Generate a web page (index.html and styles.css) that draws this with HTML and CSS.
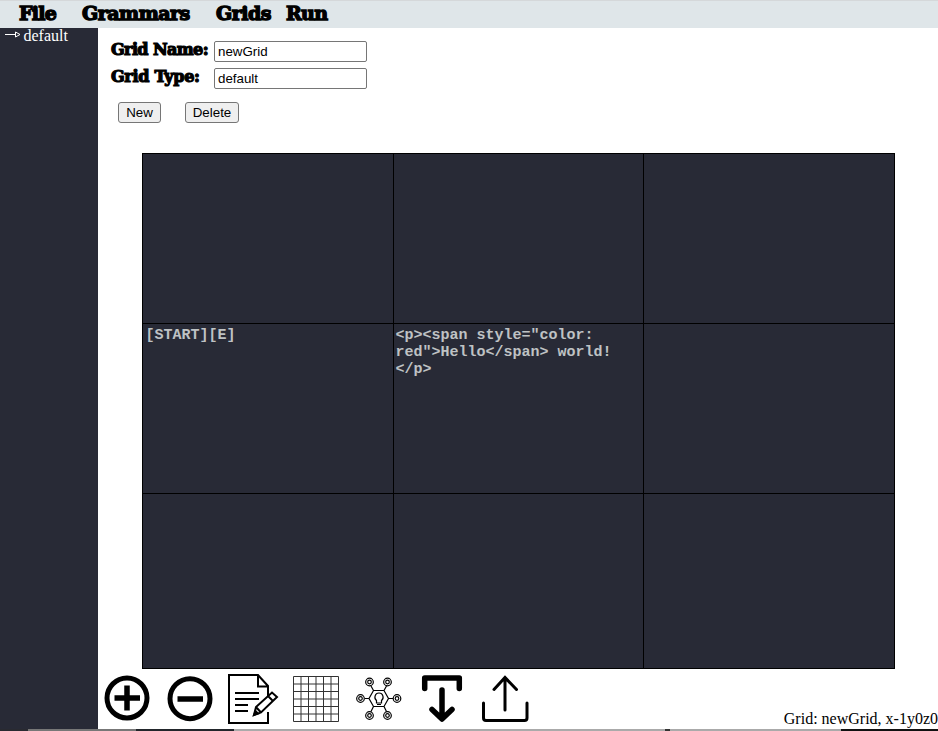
FILE: index.html
```html
<!DOCTYPE html>
<html lang="en">
<head>
<meta charset="utf-8">
<title>Grid editor</title>
<link rel="stylesheet" href="styles.css">
</head>
<body>
<div class="app">
  <nav class="menu">
    <span class="file">File</span><span class="grammars">Grammars</span><span class="grids">Grids</span><span class="run">Run</span>
  </nav>
  <div class="body">
    <aside class="sidebar">
      <svg width="16" height="8" viewBox="0 0 16 8" fill="none" stroke="#fff"><path d="M0 3.500H11M10.500 1L15 3.500L10.500 6Z"/></svg>
      <span>default</span>
    </aside>
    <main class="main">
      <form class="form">
        <label class="field"><span class="label name">Grid Name:</span><input type="text" value="newGrid"></label>
        <label class="field"><span class="label type">Grid Type:</span><input type="text" value="default"></label>
        <div class="buttons"><button type="button" class="new">New</button><button type="button" class="delete">Delete</button></div>
      </form>
      <div class="grid">
        <div></div><div></div><div></div>
        <div>[START][E]</div><div>&lt;p&gt;&lt;span style="color: red"&gt;Hello&lt;/span&gt; world!&lt;/p&gt;</div><div></div>
        <div></div><div></div><div></div>
      </div>
      <footer class="footer">
        <div class="tools">
          <svg width="46" height="56" viewBox="104 670 46 56" fill="none" stroke="#000"><circle cx="127" cy="698" r="20" stroke-width="5"/><path d="M114.500 698H140M127 685.500V710.500" stroke-width="5.500"/></svg>
          <svg width="46" height="56" viewBox="167 670 46 56" fill="none" stroke="#000"><circle cx="190" cy="698.700" r="20" stroke-width="5"/><path d="M177.500 699H203" stroke-width="5.500"/></svg>
          <svg width="52" height="56" viewBox="227 670 52 56" fill="none" stroke="#000" stroke-width="2"><path d="M268 712V723H229V675H258L268 686V698M258 675V686.500H268M235 693H259M235 699H259M235 705H248M235 711H248"/><path d="M254 715L256 707L272 692.500L277 697L261 712.500ZM256 707L261 712.500M268 696L273 701" fill="#fff"/><path d="M254 715L255.500 711L258 713.500Z" fill="#000"/></svg>
          <svg width="48" height="56" viewBox="292 670 48 56" fill="none" stroke="#333"><path d="M293.500 676.500H338.500V721.500H293.500ZM301 676V722M308.500 676V722M316 676V722M323.500 676V722M331 676V722M293 684H339M293 691.500H339M293 699H339M293 706.500H339M293 714H339"/></svg>
          <svg width="48" height="56" viewBox="355 670 48 56" fill="none" stroke="#000" stroke-width="1.200">
            <path d="M373.500 690.500H384L388.500 698.500L384 706.500H373.500L369 698.500ZM373.500 690.500L371 686M384 690.500L386.500 686M388.500 698.500H393M384 706.500L386.500 711.500M373.500 706.500L371 711.500M369 698.500H365"/>
            <path d="M376.500 700.500C373.500 698 375 693 379 693S384.500 698 381.500 700.500V703H376.500ZM377 704.500H381"/>
            <circle cx="369.500" cy="682" r="3.800"/><circle cx="369.500" cy="682" r="1.800"/>
            <circle cx="387.500" cy="682" r="3.800"/><circle cx="387.500" cy="682" r="1.800"/>
            <circle cx="360.500" cy="698.500" r="3.800"/><circle cx="360.500" cy="698.500" r="1.800"/>
            <circle cx="397" cy="698.500" r="3.800"/><circle cx="397" cy="698.500" r="1.800"/>
            <circle cx="369.500" cy="715.500" r="3.800"/><circle cx="369.500" cy="715.500" r="1.800"/>
            <circle cx="387.500" cy="715.500" r="3.800"/><circle cx="387.500" cy="715.500" r="1.800"/>
          </svg>
          <svg width="42" height="56" viewBox="421 670 42 56" fill="none" stroke="#000" stroke-width="5.500" stroke-linecap="round" stroke-linejoin="round"><path d="M424.700 688.500V678H459.300V688.500M442 690V718M432 709.500L442 719L452 709.500"/></svg>
          <svg width="50" height="56" viewBox="480 670 50 56" fill="none" stroke="#000" stroke-width="3" stroke-linecap="round"><path d="M505 710V678M494 689.500L505 677.500L516.500 689.500M483.500 703V718Q483.500 720.500 486 720.500H524.500Q527 720.500 527 718V703"/></svg>
        </div>
        <div class="status">Grid: newGrid, x-1y0z0</div>
      </footer>
    </main>
  </div>
  <div class="edge"><i class="e1"></i><i class="e2"></i><i class="e3"></i><i class="e4"></i><i class="e6"></i><i class="e7"></i><i class="e5"></i></div>
</div>
</body>
</html>
```
FILE: styles.css
```css
* { box-sizing: border-box; }
body { margin: 0; background: #fff; color: #000; font-family: "Liberation Serif", serif; font-size: 16px; }
.app { width: 938px; height: 731px; display: flex; flex-direction: column; overflow: hidden; }
.menu { height: 28px; flex: none; display: flex; padding-left: 19px; background: #dfe6e9; border-top: 1px solid #d5d8da; font: 900 19px/24px "DejaVu Serif", serif; -webkit-text-stroke: 1.4px #000; white-space: nowrap; }
.file { width: 63px; letter-spacing: -0.7px; }
.grammars { width: 134px; letter-spacing: -0.5px; }
.grids { width: 70px; letter-spacing: -0.5px; }
.run { letter-spacing: -0.7px; }
.body { flex: 1; min-height: 0; display: flex; background: #fff; }
.sidebar { width: 98px; flex: none; display: flex; align-items: flex-start; gap: 3px; padding-left: 5px; background: #282a36; color: #fff; line-height: 16px; }
.sidebar svg { margin-top: 3px; }
.sidebar span { margin-left: -0.5px; }
.main { flex: 1; min-width: 0; display: flex; flex-direction: column; }
.form { height: 125px; flex: none; padding: 13px 0 0 13px; }
.field { display: flex; height: 27px; }
.label { width: 103px; font: 900 16px/17px "DejaVu Serif", serif; -webkit-text-stroke: 1.2px #000; white-space: nowrap; }
.name { letter-spacing: -0.6px; }
.type { letter-spacing: -0.3px; }
input { width: 153px; height: 21px; margin: 0; padding: 1px 3px; border: 1px solid #767676; border-radius: 2px; background: #fff; font: 13.333px "Liberation Sans", sans-serif; }
.buttons { display: flex; gap: 24px; padding: 7px 0 0 7px; }
button { height: 21px; padding: 0; border: 1px solid #767676; border-radius: 3px; background: #efefef; color: #000; font: 13.333px/17px "Liberation Sans", sans-serif; }
.new { width: 43px; }
.delete { width: 54px; }
.grid { width: 753px; height: 516px; flex: none; margin-left: 44px; display: grid; grid-template-columns: 250px 249px 250px; grid-template-rows: 169px 169px 174px; gap: 1px; padding: 1px; background: #000; font: bold 15px/17px "Liberation Mono", monospace; color: #bfc2c4; }
.grid > div { background: #282a36; padding: 3px 1.500px; overflow-wrap: anywhere; }
.grid > div:nth-child(4) { padding-left: 2.500px; }
.footer { flex: 1; display: flex; justify-content: space-between; min-height: 0; }
.tools { display: flex; padding: 1px 0 0 6px; }
.tools svg { display: block; flex: none; margin-right: 17px; }
.tools svg:nth-child(2) { margin-right: 14px; }
.tools svg:nth-child(3) { margin-right: 13px; }
.tools svg:nth-child(4) { margin-right: 15px; }
.tools svg:nth-child(5) { margin-right: 18px; }
.status { align-self: flex-end; padding-bottom: 1px; line-height: 18px; white-space: nowrap; }
.edge { height: 2px; flex: none; display: flex; background: #aaa; }
.e1 { width: 28px; background: #292a31; }
.e2 { width: 108px; background: #777; }
.e3 { width: 98px; background: #22262b; }
.e4 { width: 431px; background: #aaa; }
.e6 { width: 5px; background: #333; }
.e7 { width: 171px; background: #aaa; }
.e5 { flex: 1; background: #111; }
```
